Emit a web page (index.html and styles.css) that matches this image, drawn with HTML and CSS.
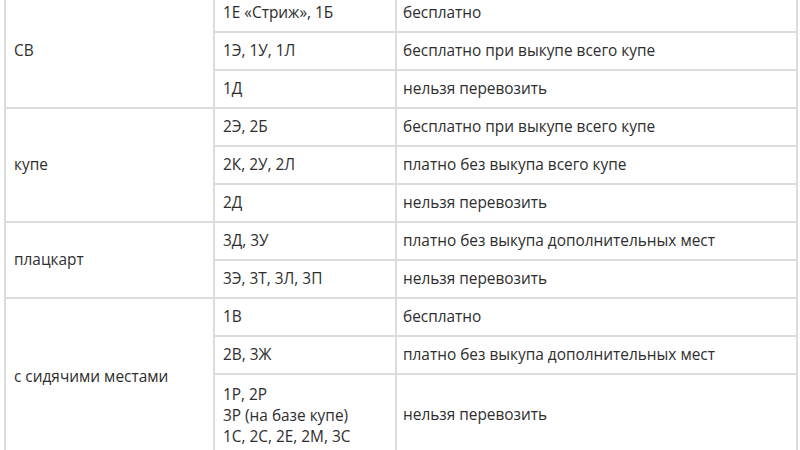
FILE: index.html
```html
<!DOCTYPE html>
<html lang="ru">
<head>
<meta charset="utf-8">
<link rel="stylesheet" href="styles.css">
</head>
<body>
<table class="rules">
  <colgroup>
    <col class="c-type">
    <col class="c-code">
    <col class="c-rule">
  </colgroup>
  <tbody>
    <tr><td rowspan="3">СВ</td><td>1Е «Стриж», 1Б</td><td>бесплатно</td></tr>
    <tr><td>1Э, 1У, 1Л</td><td>бесплатно при выкупе всего купе</td></tr>
    <tr><td>1Д</td><td>нельзя перевозить</td></tr>
    <tr><td rowspan="3">купе</td><td>2Э, 2Б</td><td>бесплатно при выкупе всего купе</td></tr>
    <tr><td>2К, 2У, 2Л</td><td>платно без выкупа всего купе</td></tr>
    <tr><td>2Д</td><td>нельзя перевозить</td></tr>
    <tr><td rowspan="2">плацкарт</td><td>3Д, 3У</td><td>платно без выкупа дополнительных мест</td></tr>
    <tr><td>3Э, 3Т, 3Л, 3П</td><td>нельзя перевозить</td></tr>
    <tr><td rowspan="3">с сидячими местами</td><td>1В</td><td>бесплатно</td></tr>
    <tr><td>2В, 3Ж</td><td>платно без выкупа дополнительных мест</td></tr>
    <tr><td class="multi">1Р, 2Р<br>3Р (на базе купе)<br>1С, 2С, 2Е, 2М, 3С</td><td>нельзя перевозить</td></tr>
  </tbody>
</table>
</body>
</html>
```

FILE: styles.css
```css
html, body {
  margin: 0;
  padding: 0;
  background: #fff;
}
body {
  font-family: "Open Sans", "Noto Sans", sans-serif;
  font-size: 15.4px;
  color: #2e2e2e;
  overflow: hidden;
}
.rules {
  border-collapse: collapse;
  table-layout: fixed;
  width: 792px;
  margin: -7px 0 0 4px;
}
.c-type { width: 209px; }
.c-code { width: 182px; }
.c-rule { width: 401px; }
.rules td {
  border: 2px solid #dcdcdc;
  padding: 8px 8px 8px 8px;
  line-height: 20px;
  height: 20px;
  vertical-align: middle;
  text-align: left;
  white-space: nowrap;
}
.rules td:last-child {
  padding-left: 6px;
}
.rules td.multi {
  line-height: 21px;
  padding-top: 9px;
  padding-left: 8px;
}
```
